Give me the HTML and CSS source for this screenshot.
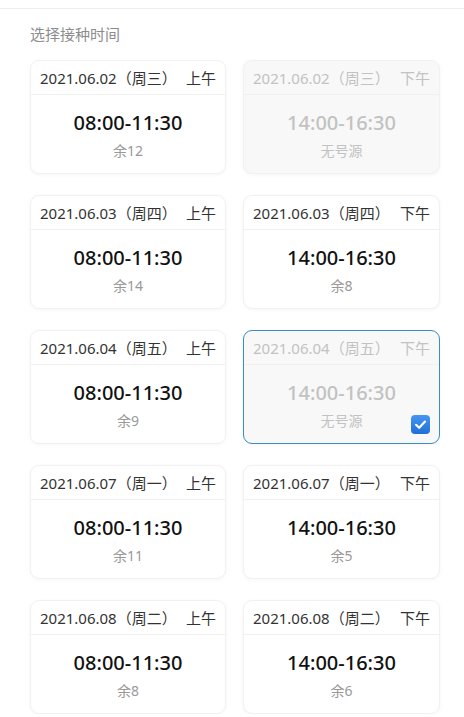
FILE: index.html
```html
<!DOCTYPE html>
<html lang="zh">
<head>
    <meta charset="UTF-8">
    <title>选择接种时间</title>
    <link rel="stylesheet" href="styles.css">
</head>
<body>

<div class="page">
    <div class="title">选择接种时间</div>

    <div class="slots">
        <div class="slot">
            <div class="slot-head"><span>2021.06.02（周三）</span><span>上午</span></div>
            <div class="slot-time">08:00-11:30</div>
            <div class="slot-left">余12</div>
        </div>
        <div class="slot disabled">
            <div class="slot-head"><span>2021.06.02（周三）</span><span>下午</span></div>
            <div class="slot-time">14:00-16:30</div>
            <div class="slot-left">无号源</div>
        </div>

        <div class="slot">
            <div class="slot-head"><span>2021.06.03（周四）</span><span>上午</span></div>
            <div class="slot-time">08:00-11:30</div>
            <div class="slot-left">余14</div>
        </div>
        <div class="slot">
            <div class="slot-head"><span>2021.06.03（周四）</span><span>下午</span></div>
            <div class="slot-time">14:00-16:30</div>
            <div class="slot-left">余8</div>
        </div>

        <div class="slot">
            <div class="slot-head"><span>2021.06.04（周五）</span><span>上午</span></div>
            <div class="slot-time">08:00-11:30</div>
            <div class="slot-left">余9</div>
        </div>
        <div class="slot disabled selected">
            <div class="slot-head"><span>2021.06.04（周五）</span><span>下午</span></div>
            <div class="slot-time">14:00-16:30</div>
            <div class="slot-left">无号源</div>
            <span class="check">
                <svg width="19" height="19" viewBox="0 0 19 19">
                    <path d="M5 9.8 L8.2 12.8 L14 6.6" fill="none" stroke="#fff" stroke-width="2.2" stroke-linecap="round" stroke-linejoin="round"/>
                </svg>
            </span>
        </div>

        <div class="slot">
            <div class="slot-head"><span>2021.06.07（周一）</span><span>上午</span></div>
            <div class="slot-time">08:00-11:30</div>
            <div class="slot-left">余11</div>
        </div>
        <div class="slot">
            <div class="slot-head"><span>2021.06.07（周一）</span><span>下午</span></div>
            <div class="slot-time">14:00-16:30</div>
            <div class="slot-left">余5</div>
        </div>

        <div class="slot">
            <div class="slot-head"><span>2021.06.08（周二）</span><span>上午</span></div>
            <div class="slot-time">08:00-11:30</div>
            <div class="slot-left">余8</div>
        </div>
        <div class="slot">
            <div class="slot-head"><span>2021.06.08（周二）</span><span>下午</span></div>
            <div class="slot-time">14:00-16:30</div>
            <div class="slot-left">余6</div>
        </div>
    </div>
</div>

</body>
</html>
```

FILE: styles.css
```css
body {
    margin: 0;
    background-color: #fff;
    font-family: "Noto Sans", "Noto Sans CJK SC", sans-serif;
    color: #333;
}
.page {
    margin-top: 8px;
    border-top: 1px solid #efefef;
    padding: 15px 24px 0 30px;
}
.title {
    font-size: 15px;
    line-height: 20px;
    color: #8c8c8c;
}
.slots {
    display: grid;
    grid-template-columns: 196px 197px;
    column-gap: 17px;
    row-gap: 21px;
    margin-top: 16px;
}
.slot {
    position: relative;
    height: 114px;
    box-sizing: border-box;
    border: 1px solid #f1f1f1;
    border-radius: 9px;
    box-shadow: 0 1px 4px rgba(0, 0, 0, 0.04);
    background-color: #fff;
    text-align: center;
}
.slot-head {
    display: flex;
    justify-content: space-between;
    align-items: center;
    height: 33px;
    padding: 0 9px;
    border-bottom: 1px solid #f0f0f0;
    font-size: 15px;
    color: #333;
}
.slot-time {
    margin-top: 14px;
    font-size: 20px;
    line-height: 28px;
    font-weight: 500;
    color: #111;
}
.slot-left {
    margin-top: 4px;
    font-size: 14px;
    line-height: 20px;
    color: #999;
}
.disabled {
    background-color: #f8f8f8;
}
.disabled .slot-head,
.disabled .slot-time,
.disabled .slot-left {
    color: #c2c2c2;
}
.selected {
    border: 1.5px solid #3a8cc4;
}
.check {
    position: absolute;
    right: 9px;
    bottom: 9px;
    width: 19px;
    height: 19px;
    border-radius: 4px;
    background: linear-gradient(#4697f2, #1f6fd8);
}
.check svg {
    display: block;
}
```
